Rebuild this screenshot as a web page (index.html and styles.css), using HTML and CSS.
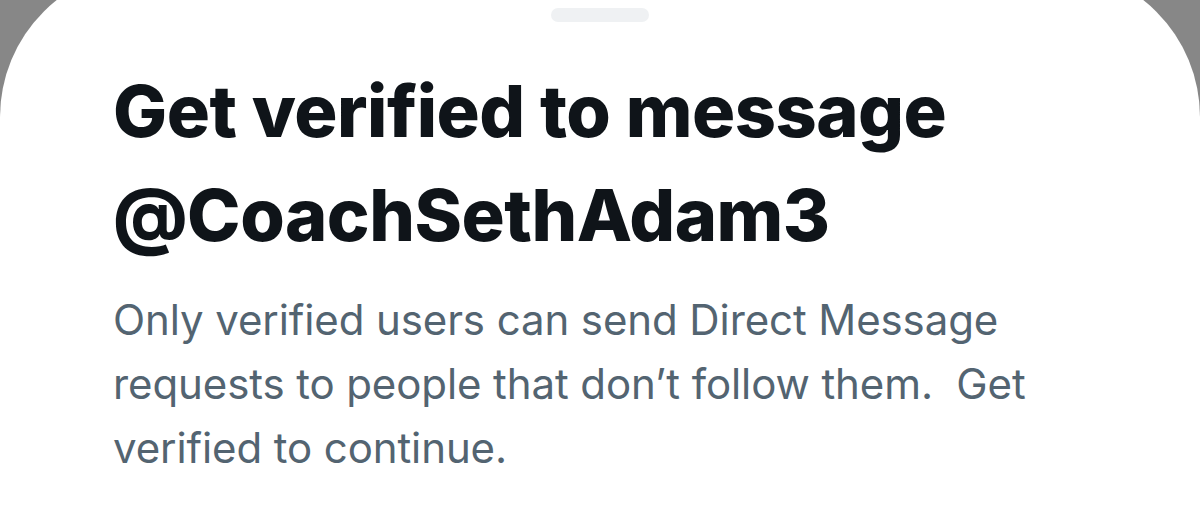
FILE: index.html
```html
<!DOCTYPE html>
<html>
<head>
<meta charset="utf-8">
<link rel="stylesheet" href="styles.css">
</head>
<body>
<div class="sheet">
  <div class="handle"></div>
  <div class="content">
    <h1 class="title">Get verified to message<br>@CoachSethAdam3</h1>
    <p class="desc">Only verified users can send Direct Message<br>requests to people that don’t follow them.&nbsp; Get<br>verified to continue.</p>
  </div>
</div>
</body>
</html>
```
FILE: styles.css
```css
html, body {
  margin: 0;
  padding: 0;
  background: #878787;
  width: 1200px;
  height: 532px;
  overflow: hidden;
}
.sheet {
  margin-top: -32px;
  height: 564px;
  background: #ffffff;
  border-radius: 149px 149px 0 0;
  display: flex;
  flex-direction: column;
  align-items: stretch;
}
.handle {
  align-self: center;
  margin-top: 40px;
  width: 98px;
  height: 14px;
  border-radius: 7px;
  background: #eff1f3;
}
.content {
  padding: 0 113px;
}
.title {
  margin: 37px 0 0 0;
  font-family: "Inter", "Liberation Sans", sans-serif;
  font-weight: 800;
  font-size: 72px;
  line-height: 104px;
  color: #0f1419;
  letter-spacing: -0.5px;
}
.desc {
  margin: 21px 0 0 0;
  font-family: "Inter", "Liberation Sans", sans-serif;
  font-weight: 400;
  font-size: 42px;
  line-height: 64px;
  color: #536471;
  letter-spacing: -0.1px;
}
```
